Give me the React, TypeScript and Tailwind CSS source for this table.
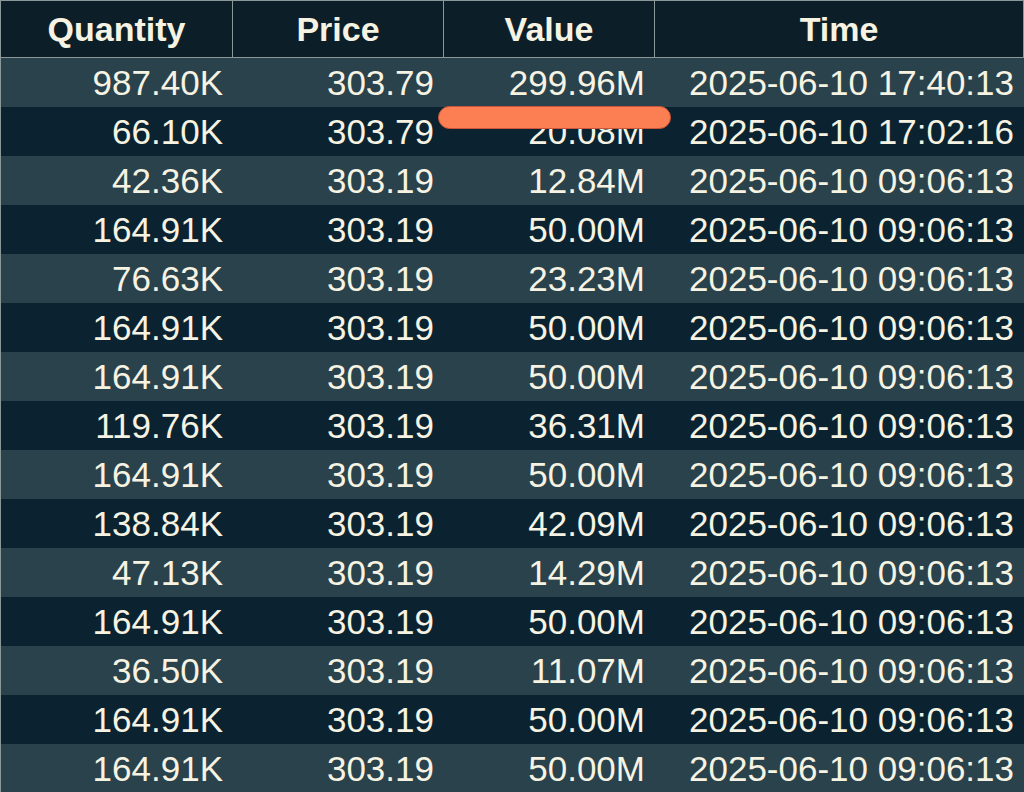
import React from "react";

type Trade = { qty: string; price: string; value: string; time: string };

const trades: Trade[] = [
  { qty: "987.40K", price: "303.79", value: "299.96M", time: "2025-06-10 17:40:13" },
  { qty: "66.10K", price: "303.79", value: "20.08M", time: "2025-06-10 17:02:16" },
  { qty: "42.36K", price: "303.19", value: "12.84M", time: "2025-06-10 09:06:13" },
  { qty: "164.91K", price: "303.19", value: "50.00M", time: "2025-06-10 09:06:13" },
  { qty: "76.63K", price: "303.19", value: "23.23M", time: "2025-06-10 09:06:13" },
  { qty: "164.91K", price: "303.19", value: "50.00M", time: "2025-06-10 09:06:13" },
  { qty: "164.91K", price: "303.19", value: "50.00M", time: "2025-06-10 09:06:13" },
  { qty: "119.76K", price: "303.19", value: "36.31M", time: "2025-06-10 09:06:13" },
  { qty: "164.91K", price: "303.19", value: "50.00M", time: "2025-06-10 09:06:13" },
  { qty: "138.84K", price: "303.19", value: "42.09M", time: "2025-06-10 09:06:13" },
  { qty: "47.13K", price: "303.19", value: "14.29M", time: "2025-06-10 09:06:13" },
  { qty: "164.91K", price: "303.19", value: "50.00M", time: "2025-06-10 09:06:13" },
  { qty: "36.50K", price: "303.19", value: "11.07M", time: "2025-06-10 09:06:13" },
  { qty: "164.91K", price: "303.19", value: "50.00M", time: "2025-06-10 09:06:13" },
  { qty: "164.91K", price: "303.19", value: "50.00M", time: "2025-06-10 09:06:13" },
];

const cols = "grid grid-cols-[232px_211px_211px_370px]";

export default function App() {
  return (
    <div
      className="relative h-[792px] w-[1024px] overflow-hidden bg-[#0b2330] text-[#f6f3e3]"
      style={{ fontFamily: '"Liberation Sans", Arial, sans-serif' }}
    >
      {/* Header */}
      <div className={`${cols} h-[58px] border-t border-l border-b border-[#8a9897] bg-[#0c1f29]`}>
        {["Quantity", "Price", "Value", "Time"].map((h, i) => (
          <div
            key={h}
            className={`flex items-center justify-center text-[34px] font-bold ${
              i < 3 ? "border-r border-[#8a9897]" : "border-r-2 border-[#8a9897]"
            }`}
          >
            {h}
          </div>
        ))}
      </div>

      {/* Rows */}
      <div className="border-l border-[#8a9897]">
        {trades.map((t, idx) => (
          <div
            key={idx}
            className={`${cols} h-[49px] text-[35px] leading-none ${
              idx % 2 === 0 ? "bg-[#2a424b]" : "bg-[#0b2330]"
            }`}
          >
            <div className="flex items-center justify-end pr-[10px]">{t.qty}</div>
            <div className="flex items-center justify-end pr-[10px]">{t.price}</div>
            <div className="flex items-center justify-end pr-[10px]">{t.value}</div>
            <div className="flex items-center justify-end pr-[11px]">{t.time}</div>
          </div>
        ))}
      </div>

      {/* highlighter mark */}
      <div className="absolute left-[438px] top-[106px] h-[23px] w-[233px] rounded-full border border-[#c9553a] bg-[#fb7f52]" />
    </div>
  );
}
